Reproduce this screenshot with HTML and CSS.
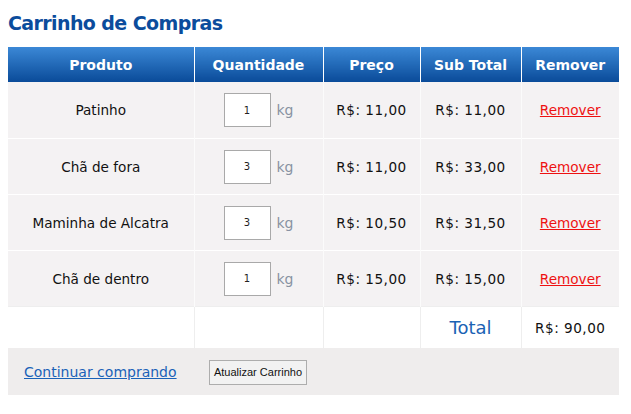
FILE: index.html
```html
<!DOCTYPE html>
<html lang="pt-BR">
<head>
<meta charset="utf-8">
<title>Carrinho de Compras</title>
<link rel="stylesheet" href="styles.css">
</head>
<body>
<h1 class="title">Carrinho de Compras</h1>
<table class="cart">
  <colgroup>
    <col class="c-prod"><col class="c-qty"><col class="c-price"><col class="c-sub"><col class="c-rem">
  </colgroup>
  <thead>
    <tr>
      <th>Produto</th><th>Quantidade</th><th>Preço</th><th>Sub Total</th><th>Remover</th>
    </tr>
  </thead>
  <tbody>
    <tr class="item">
      <td>Patinho</td>
      <td><span class="qty"><input class="qty-input" type="text" value="1"><span class="unit">kg</span></span></td>
      <td class="money">R$: 11,00</td><td class="money">R$: 11,00</td>
      <td><a class="remove" href="#">Remover</a></td>
    </tr>
    <tr class="item">
      <td>Chã de fora</td>
      <td><span class="qty"><input class="qty-input" type="text" value="3"><span class="unit">kg</span></span></td>
      <td class="money">R$: 11,00</td><td class="money">R$: 33,00</td>
      <td><a class="remove" href="#">Remover</a></td>
    </tr>
    <tr class="item">
      <td>Maminha de Alcatra</td>
      <td><span class="qty"><input class="qty-input" type="text" value="3"><span class="unit">kg</span></span></td>
      <td class="money">R$: 10,50</td><td class="money">R$: 31,50</td>
      <td><a class="remove" href="#">Remover</a></td>
    </tr>
    <tr class="item">
      <td>Chã de dentro</td>
      <td><span class="qty"><input class="qty-input" type="text" value="1"><span class="unit">kg</span></span></td>
      <td class="money">R$: 15,00</td><td class="money">R$: 15,00</td>
      <td><a class="remove" href="#">Remover</a></td>
    </tr>
    <tr class="total-row">
      <td></td><td></td><td></td>
      <td class="total-label">Total</td>
      <td class="money">R$: 90,00</td>
    </tr>
    <tr class="foot-row">
      <td class="left"><a class="continue" href="#">Continuar comprando</a></td>
      <td class="left"><button class="update" type="button">Atualizar Carrinho</button></td>
      <td></td><td></td><td></td>
    </tr>
  </tbody>
</table>
</body>
</html>
```
FILE: styles.css
```css
body {
  margin: 8px;
  background: #ffffff;
  font-family: "DejaVu Sans", Verdana, sans-serif;
  color: #111111;
}

.title {
  margin: 4px 0 12px;
  font-size: 19px;
  line-height: 23px;
  font-weight: bold;
  letter-spacing: -0.6px;
  color: #0b4c9c;
}

.cart {
  width: 611px;
  border-collapse: collapse;
  table-layout: fixed;
  font-size: 13.6px;
}

.c-prod { width: 186px; }
.c-qty { width: 129px; }
.c-price { width: 97px; }
.c-sub { width: 101px; }
.c-rem { width: 98px; }

.cart th {
  height: 35px;
  padding: 0;
  box-sizing: border-box;
  background: linear-gradient(to bottom, #3b88d6, #0a4b99);
  color: #ffffff;
  font-size: 14px;
  font-weight: bold;
  border-left: 1px solid #ffffff;
  text-align: center;
}

.cart th:first-child { border-left: none; }

.cart td {
  padding: 0;
  text-align: center;
  vertical-align: middle;
  border-left: 1px solid #fbfbfb;
}

.cart td:first-child { border-left: none; }

.cart td.money { letter-spacing: 0.5px; }

.item td {
  height: 55px;
  background: #f4f2f3;
  border-top: 1px solid #ffffff;
}

.item:first-child td { border-top: none; height: 56px; }

.qty {
  display: inline-flex;
  align-items: center;
  gap: 6px;
}

.qty-input {
  box-sizing: border-box;
  width: 47px;
  height: 34px;
  margin: 0;
  padding: 0;
  border: 1px solid #a9a9a9;
  background: #ffffff;
  font-family: "DejaVu Sans", Verdana, sans-serif;
  font-size: 10px;
  color: #222222;
  text-align: center;
}

.unit {
  font-size: 14px;
  color: #8892a2;
}

.remove {
  color: #ee1111;
  text-decoration: underline;
}

.total-row td {
  height: 41px;
  background: #ffffff;
  border-top: 1px solid #eeeeee;
  border-left: 1px solid #eeeeee;
}

.total-row td:first-child { border-left: none; }

.total-label {
  font-size: 18px;
  color: #1a62b4;
}

.foot-row td {
  height: 47px;
  background: #efeded;
  border-left: none;
  border-bottom: 1px solid #ffffff;
}

.foot-row td.left {
  text-align: left;
  padding-left: 15px;
}

.foot-row td.left:first-child { padding-left: 16px; }

.continue {
  font-size: 14px;
  color: #1a62b8;
  text-decoration: underline;
}

.update {
  box-sizing: border-box;
  width: 98px;
  height: 25px;
  padding: 0;
  border: 1px solid #adadad;
  background: #f2f2f2;
  font-family: "Liberation Sans", Arial, sans-serif;
  font-size: 11px;
  color: #111111;
  margin-top: 1px;
}
```
